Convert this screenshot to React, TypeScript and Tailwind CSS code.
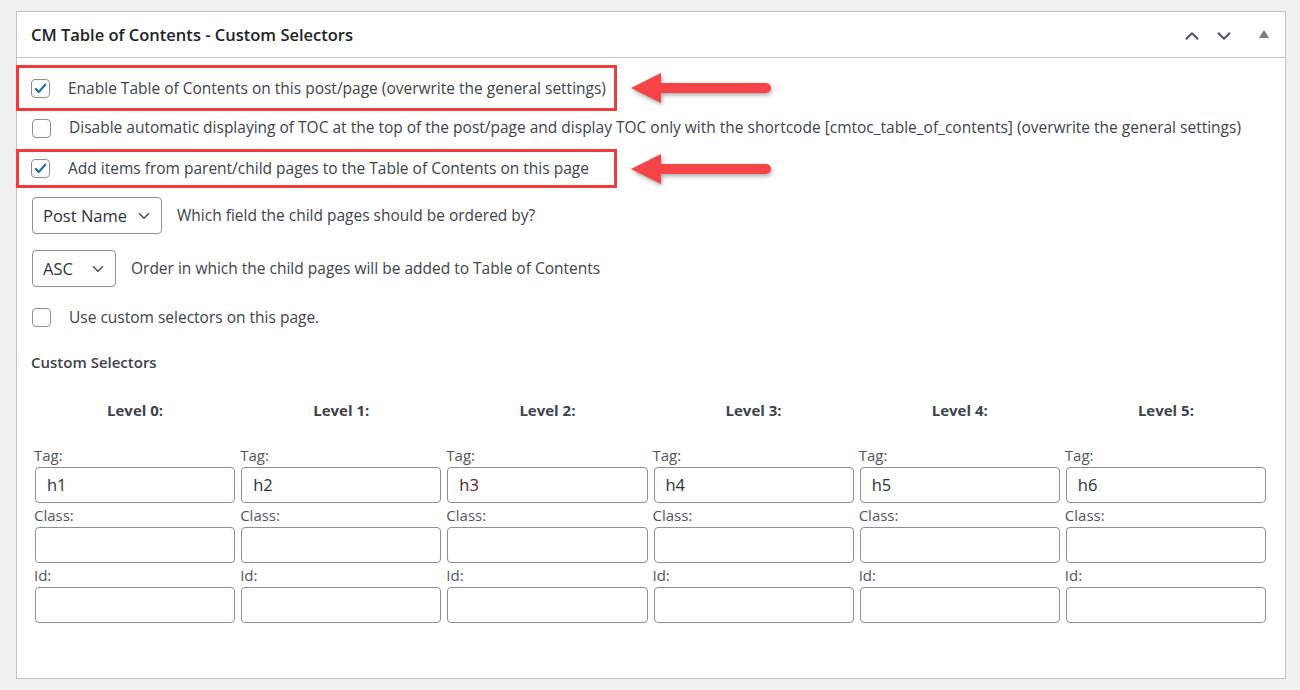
import { ChevronDown, ChevronUp } from 'lucide-react';

const LEVELS = [0, 1, 2, 3, 4, 5];
const FONT = { fontFamily: '"Open Sans", "Noto Sans", sans-serif' };

function Check({ on }: { on?: boolean }) {
  return (
    <span className="flex h-[19px] w-[19px] shrink-0 items-center justify-center rounded-[4px] border border-[#8c8f94] bg-white">
      {on && (
        <svg viewBox="0 0 20 20" className="block h-[17px] w-[17px]">
          <path d="M4.5 10.5l3.5 3.5 7.5-8.5" fill="none" stroke="#2271b1" strokeWidth="2.6" strokeLinecap="round" strokeLinejoin="round" />
        </svg>
      )}
    </span>
  );
}

// red pointer arrow with a soft shadow
function Arrow() {
  return (
    <svg width="146" height="36" viewBox="0 0 146 36" className="block drop-shadow-[1px_2px_2px_rgba(0,0,0,0.35)]">
      <path d="M2 18 L32 3 L32 13 L137 13 A5 5 0 0 1 137 23 L32 23 L32 33 Z" fill="#f44447" />
    </svg>
  );
}

function Select({ label, w }: { label: string; w: string }) {
  return (
    <div className={`flex h-[37px] ${w} items-center justify-between rounded-[4px] border border-[#8c8f94] bg-white pl-[10px] pr-[8px] pt-px text-[16.5px] text-[#2c3338]`}>
      <span>{label}</span>
      <ChevronDown size={18} strokeWidth={2.2} className="text-[#50575e]" />
    </div>
  );
}

function Field({ label, value, red }: { label: string; value?: string; red?: boolean }) {
  return (
    <div>
      <div className="-ml-px text-[15px] leading-[24px] text-[#50575e]">{label}</div>
      <div className={`flex h-[36px] items-center rounded-[4px] border border-[#8c8f94] bg-white px-[11px] text-[16.5px] ${red ? 'text-[#5c2424]' : 'text-[#2c3338]'}`}>
        {value}
      </div>
    </div>
  );
}

export default function App() {
  return (
    <div className="min-h-[690px] bg-[#f0f0f1] pt-[11px] pl-[16px]" style={FONT}>
      <div className="h-[668px] w-[1270px] border border-[#c3c4c7] bg-white text-[15.5px] text-[#3c434a]">
        {/* header */}
        <div className="flex h-[46px] items-center justify-between border-b border-[#c3c4c7] pl-[14px] pr-[16px] pt-[2px]">
          <h2 className="text-[16.5px] font-semibold text-[#1d2327]">CM Table of Contents - Custom Selectors</h2>
          <div className="flex items-center text-[#50575e]">
            <ChevronUp size={22} strokeWidth={2.2} />
            <ChevronDown size={22} strokeWidth={2.2} className="ml-[10px]" />
            <svg width="10" height="8" viewBox="0 0 10 8" className="mb-[3px] ml-[24px] block">
              <path d="M5 0L10 8H0Z" fill="#787c82" />
            </svg>
          </div>
        </div>

        <div className="px-[15px]">
          <div className="mt-[7px] flex items-center">
            <div className="-ml-[16px] flex h-[46px] w-[601px] items-center gap-[18px] border-[3px] border-[#f2393d] pl-[12px] pt-px">
              <Check on />
              <span>Enable Table of Contents on this post/page (overwrite the general settings)</span>
            </div>
            <div className="ml-[12px]"><Arrow /></div>
          </div>

          <div className="flex h-[34px] items-center gap-[18px]">
            <Check />
            <span className="whitespace-nowrap">Disable automatic displaying of TOC at the top of the post/page and display TOC only with the shortcode [cmtoc_table_of_contents] (overwrite the general settings)</span>
          </div>

          <div className="mt-[4px] flex items-center">
            <div className="-ml-[16px] flex h-[39px] w-[601px] items-center gap-[18px] border-[3px] border-[#f2393d] pl-[12px]">
              <Check on />
              <span>Add items from parent/child pages to the Table of Contents on this page</span>
            </div>
            <div className="ml-[12px]"><Arrow /></div>
          </div>

          <div className="mt-[9px] flex items-center gap-[15px]">
            <Select label="Post Name" w="w-[130px]" />
            <span>Which field the child pages should be ordered by?</span>
          </div>

          <div className="mt-[16px] flex items-center gap-[15px]">
            <Select label="ASC" w="w-[84px]" />
            <span>Order in which the child pages will be added to Table of Contents</span>
          </div>

          <div className="mt-[19px] flex items-center gap-[18px]">
            <Check />
            <span>Use custom selectors on this page.</span>
          </div>

          <div className="-ml-px mt-[23px] text-[15px] font-semibold leading-[20px] text-[#3c434a]">Custom Selectors</div>

          <div className="ml-[3px] mt-[28px] grid w-[1231px] grid-cols-6 gap-x-[6px]">
            {LEVELS.map((l) => (
              <div key={l} className="text-center text-[15px] font-bold leading-[20px] text-[#3c434a]">
                Level {l}:
              </div>
            ))}
          </div>

          <div className="ml-[3px] mt-[23px] grid w-[1231px] grid-cols-6 gap-x-[6px]">
            {LEVELS.map((l) => (
              <div key={l}>
                <Field label="Tag:" value={`h${l + 1}`} red={l === 2} />
                <Field label="Class:" />
                <Field label="Id:" />
              </div>
            ))}
          </div>
        </div>
      </div>
    </div>
  );
}
